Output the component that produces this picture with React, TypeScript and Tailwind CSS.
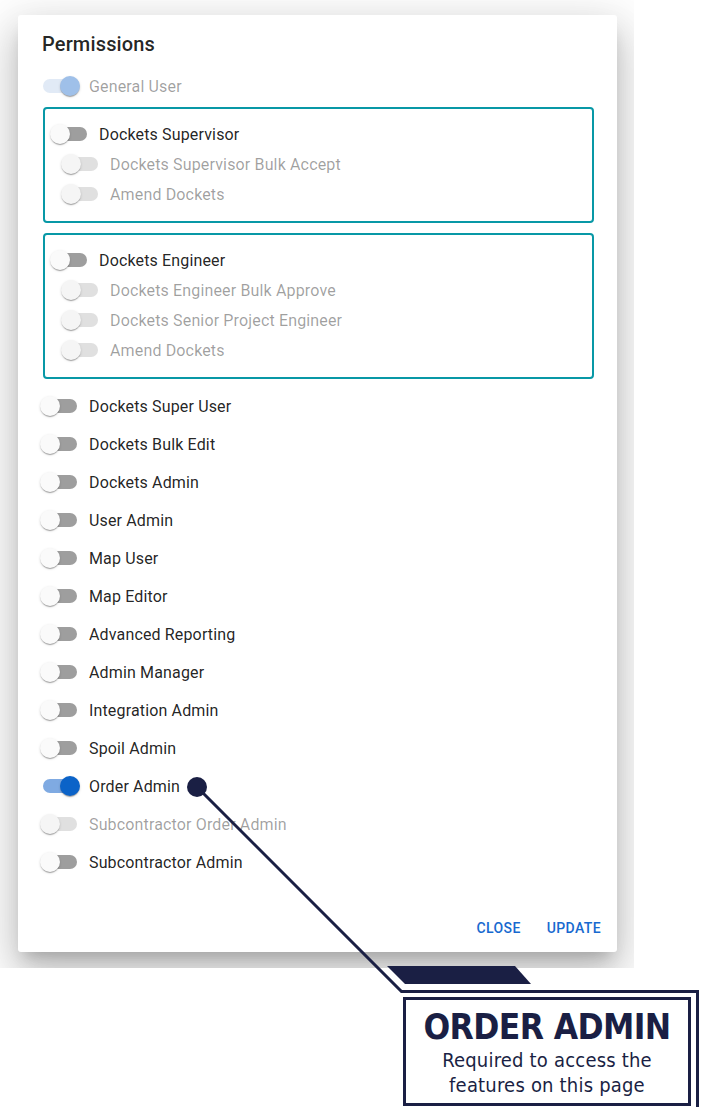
import React from 'react';

type Perm = { label: string; on?: boolean; disabled?: boolean };

const Toggle: React.FC<{ on?: boolean; disabled?: boolean }> = ({ on, disabled }) => {
  const track = on
    ? disabled
      ? 'bg-[#e1eaf6]'
      : 'bg-[#7faae2]'
    : disabled
      ? 'bg-[#e0e0e0]'
      : 'bg-[#9e9e9e]';
  const thumb = on
    ? disabled
      ? 'left-[29px] bg-[#9fc0e9]'
      : 'left-[29px] bg-[#0b63c8]'
    : disabled
      ? 'left-[9px] bg-[#f5f5f5]'
      : 'left-[9px] bg-[#fafafa]';
  return (
    <span className="relative block w-[58px] h-5 shrink-0">
      <span className={`absolute left-3 top-[3px] w-[34px] h-[14px] rounded-full ${track}`} />
      <span
        className={`absolute top-0 w-5 h-5 rounded-full shadow-[0_2px_1px_-1px_rgba(0,0,0,0.2),0_1px_1px_0_rgba(0,0,0,0.14),0_1px_3px_0_rgba(0,0,0,0.12)] ${thumb}`}
      />
    </span>
  );
};

const Row: React.FC<Perm & { className: string }> = ({ label, on, disabled, className }) => (
  <div className={`flex items-center ${className}`}>
    <Toggle on={on} disabled={disabled} />
    <span
      className={`pt-[2px] text-[16px] leading-6 tracking-[0.15px] whitespace-nowrap ${
        disabled ? 'text-[rgba(0,0,0,0.38)]' : 'text-[rgba(0,0,0,0.87)]'
      }`}
    >
      {label}
    </span>
  </div>
);

const Group: React.FC<{ main: string; subs: string[]; className: string }> = ({ main, subs, className }) => (
  <div className={`ml-px mr-[-1px] border-2 border-[#0898a6] rounded-[4px] pt-[10px] pb-[12px] ${className}`}>
    <Row label={main} className="h-[30px] ml-[-4px]" />
    {subs.map((s) => (
      <Row key={s} label={s} disabled className="h-[30px] ml-[7px]" />
    ))}
  </div>
);

const rows: Perm[] = [
  { label: 'Dockets Super User' },
  { label: 'Dockets Bulk Edit' },
  { label: 'Dockets Admin' },
  { label: 'User Admin' },
  { label: 'Map User' },
  { label: 'Map Editor' },
  { label: 'Advanced Reporting' },
  { label: 'Admin Manager' },
  { label: 'Integration Admin' },
  { label: 'Spoil Admin' },
  { label: 'Order Admin', on: true },
  { label: 'Subcontractor Order Admin', disabled: true },
  { label: 'Subcontractor Admin' },
];

export default function App() {
  return (
    <div className="relative w-[711px] h-[1120px] bg-white overflow-hidden font-['Roboto',sans-serif]">
      {/* dialog, cropped like the original capture */}
      <div className="w-[634px] h-[968px] overflow-hidden pt-[15px] pl-[18px]">
        <div className="w-[599px] h-[937px] flex flex-col bg-white rounded-[3px] shadow-[0_11px_15px_-7px_rgba(0,0,0,0.2),0_24px_38px_3px_rgba(0,0,0,0.14),0_9px_46px_8px_rgba(0,0,0,0.12)]">
          <div className="px-6">
            <h2 className="pt-[17px] text-[20px] leading-6 font-medium tracking-[0.15px] text-[rgba(0,0,0,0.87)]">
              Permissions
            </h2>
            <div className="ml-[-11px] mt-[11px]">
              <Row label="General User" on disabled className="h-[38px]" />
            </div>
            <Group
              main="Dockets Supervisor"
              subs={['Dockets Supervisor Bulk Accept', 'Amend Dockets']}
              className="mt-[2px]"
            />
            <Group
              main="Dockets Engineer"
              subs={['Dockets Engineer Bulk Approve', 'Dockets Senior Project Engineer', 'Amend Dockets']}
              className="mt-[10px]"
            />
            <div className="ml-[-11px] mt-[8px]">
              {rows.map((r) => (
                <Row key={r.label} {...r} className="h-[38px]" />
              ))}
            </div>
          </div>
          <div className="mt-auto flex justify-end gap-2 px-2 pt-[10px] pb-[6px]">
            <button className="h-9 min-w-16 px-2 text-[14px] font-medium tracking-[0.4px] text-[#1769cf] uppercase">
              Close
            </button>
            <button className="h-9 min-w-16 px-2 text-[14px] font-medium tracking-[0.4px] text-[#1769cf] uppercase">
              Update
            </button>
          </div>
        </div>
      </div>

      {/* callout leader */}
      <svg className="absolute inset-0 pointer-events-none" width="711" height="1120" viewBox="0 0 711 1120">
        <polyline
          points="197,787 401.5,991.5 697.5,991.5 697.5,1107"
          fill="none"
          stroke="#1a1f44"
          strokeWidth="3"
          strokeLinejoin="miter"
        />
        <circle cx="197" cy="787" r="10" fill="#1a1f44" />
        <polygon points="387,966 515,966 531,984 405,984" fill="#1a1f44" />
      </svg>

      {/* callout box */}
      <div className="absolute left-[403px] top-[997px] w-[288px] h-[109px] border-[3px] border-[#1a1f44] bg-white flex flex-col items-center pt-[8px] text-[#1a1f44] font-['DejaVu_Sans_Condensed','DejaVu_Sans',sans-serif]">
        <div className="text-[35px] leading-[38px] font-bold tracking-[-0.6px] whitespace-nowrap">ORDER ADMIN</div>
        <div className="mt-[2px] text-[20px] leading-[25px] tracking-[0.2px] text-center whitespace-nowrap">
          Required to access the
          <br />
          features on this page
        </div>
      </div>
    </div>
  );
}
